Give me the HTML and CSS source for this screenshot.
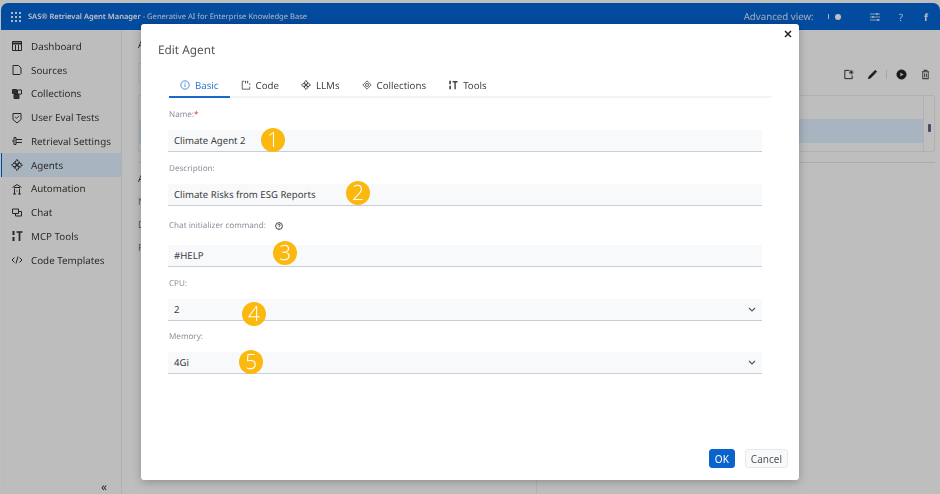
FILE: index.html
```html
<!DOCTYPE html>
<html lang="en">
<head>
<meta charset="utf-8">
<title>Edit Agent</title>
<link rel="stylesheet" href="styles.css">
</head>
<body>
<div class="app">
  <header class="topbar">
    <svg class="grid-icon" width="10" height="10" viewBox="0 0 10 10" fill="#f0f6ff"><rect x="0" y="0" width="2" height="2"/><rect x="4" y="0" width="2" height="2"/><rect x="8" y="0" width="2" height="2"/><rect x="0" y="4" width="2" height="2"/><rect x="4" y="4" width="2" height="2"/><rect x="8" y="4" width="2" height="2"/><rect x="0" y="8" width="2" height="2"/><rect x="4" y="8" width="2" height="2"/><rect x="8" y="8" width="2" height="2"/></svg>
    <span class="brand">SAS® Retrieval Agent Manager</span>
    <span class="subtitle">&nbsp;- Generative AI for Enterprise Knowledge Base</span>
    <div class="top-right">
      <span class="adv">Advanced view:</span>
      <span class="toggle"><i class="tick"></i><i class="knob"></i></span>
      <svg class="sliders" width="10" height="8" viewBox="0 0 10 8" stroke="#e4eefc" fill="none"><path d="M0 1h10M0 4h10M0 7h10" stroke-width=".8"/><path d="M7 0v2M3 3v2M8 6v2" stroke-width="1.500"/></svg>
      <span class="help">?</span>
      <span class="user">f</span>
    </div>
  </header>
  <div class="body">
    <nav class="sidebar">
      <a class="nav-item"><svg class="nav-icon" viewBox="0 0 12 12"><path d="M1.500 1.500h9v9h-9z"/><path d="M1.500 3.500h9" stroke-width="2"/><path d="M4.500 5v5.500M7.500 5v5.500"/></svg>Dashboard</a>
      <a class="nav-item"><svg class="nav-icon" viewBox="0 0 12 12"><path d="M2 1.500h5.500l2.500 2.500v5.500l-1 1H2z"/></svg>Sources</a>
      <a class="nav-item"><svg class="nav-icon" viewBox="0 0 12 12"><path d="M1.500 1.500h4v4h-4z" fill="#444"/><path d="M6.500 2h4v4h-4z"/><path d="M3 6.500h5v4H3z" fill="#444"/></svg>Collections</a>
      <a class="nav-item"><svg class="nav-icon" viewBox="0 0 12 12"><path d="M2 1.500h8v6l-4 3.500-4-3.500zM4.200 5l1.300 1.300L8 3.800M2 1.500h2"/></svg>User Eval Tests</a>
      <a class="nav-item"><svg class="nav-icon" viewBox="0 0 12 12"><path d="M3 2.500h2v7H3zM5 4.500h6M5 7.500h6M1 6h2"/></svg>Retrieval Settings</a>
      <a class="nav-item active"><svg class="nav-icon" viewBox="0 0 12 12"><path d="M6 1l5 5-5 5-5-5z" stroke-dasharray="1.500 .8" stroke-width="1.400"/><path d="M3.500 3.500l5 5M8.500 3.500l-5 5" stroke-width="1.400"/></svg>Agents</a>
      <a class="nav-item"><svg class="nav-icon" viewBox="0 0 12 12"><path d="M1.500 4.500L6 1.500l4.500 3M3 4.500h6M3.500 5.500v5.500M8.500 5.500v5.500M5.500 8h1M2 11h3M7 11h3"/></svg>Automation</a>
      <a class="nav-item"><svg class="nav-icon" viewBox="0 0 12 12"><path d="M1.500 2h6v4.500h-6zM4.500 6.500v2.500h6V4.500h-3"/></svg>Chat</a>
      <a class="nav-item"><svg class="nav-icon" viewBox="0 0 12 12"><path d="M2.500 1v4M2.500 7v4" stroke-width="2"/><path d="M5.500 2h6M8.500 2v9" stroke-width="1.700"/></svg>MCP Tools</a>
      <a class="nav-item"><svg class="nav-icon" viewBox="0 0 12 12"><path d="M3.500 3.500L1 6l2.500 2.500M8.500 3.500L11 6 8.500 8.500M7 2.500L5 9.500"/></svg>Code Templates</a>
      <span class="collapse">«</span>
    </nav>
    <main class="main">
      <div class="main-left">
        <p class="bg-title">A</p>
        <div class="bg-search"></div>
        <div class="bg-box"><div class="bg-head"></div><div class="bg-row"></div></div>
        <div class="bg-divider"></div>
        <p class="bg-a">A</p>
        <p class="bg-line">N</p>
        <p class="bg-line">D</p>
        <p class="bg-line">F</p>
      </div>
      <div class="main-right">
        <div class="toolbar">
          <svg class="tool" viewBox="0 0 12 12"><path d="M7 1.500H2v9h8V7"/><path d="M9 1v5M6.500 3.500h5M7.300 1.800l3.400 3.400M10.700 1.800L7.300 5.200" stroke-width=".8"/></svg>
          <svg class="tool" viewBox="0 0 12 12"><path d="M1.500 10.500l1-2.500 5-5 1.500 1.500-5 5z" fill="#222"/><path d="M8 2.500l1-1 1.500 1.500-1 1z" fill="#222"/></svg>
          <i class="tool-sep"></i>
          <svg class="tool" viewBox="0 0 12 12"><circle cx="6" cy="6" r="5" fill="#222"/><path d="M4.700 3.700v4.600L8.300 6z" fill="#ddd" stroke="none"/></svg>
          <svg class="tool dim" viewBox="0 0 12 12"><path d="M2 3h8M4.500 3V1.500h3V3M3 3v7.500h6V3M5 5v4M7 5v4"/></svg>
        </div>
        <div class="table">
          <div class="table-col">
            <div class="table-head"></div>
            <div class="table-row"></div>
          </div>
          <div class="table-scroll"><i class="scroll-thumb"></i></div>
        </div>
        <div class="bg-rule"></div>
      </div>
    </main>
  </div>
</div>

<div class="overlay"></div>

<section class="modal">
  <button class="close" aria-label="Close"><svg width="8" height="8" viewBox="0 0 8 8" stroke="#222" stroke-width="1.500"><path d="M1 1l6 6M7 1L1 7"/></svg></button>
  <h1 class="modal-title">Edit Agent</h1>
  <div class="tabs">
    <a class="tab active"><svg class="tab-icon" viewBox="0 0 12 12"><circle cx="6" cy="6" r="5"/><path d="M6 5.300v3.200M6 3.200v1.200"/></svg>Basic</a>
    <a class="tab"><svg class="tab-icon" viewBox="0 0 12 12"><path d="M4 1.500H1.500v9.500h9V8M10.500 6V4" /><path d="M5.500 1v3M8 1v3" stroke-width="1.200"/></svg>Code</a>
    <a class="tab"><svg class="tab-icon" viewBox="0 0 12 12"><path d="M6 1l5 5-5 5-5-5z" stroke-dasharray="1.500 .8" stroke-width="1.400"/><path d="M3.500 3.500l5 5M8.500 3.500l-5 5" stroke-width="1.400"/></svg>LLMs</a>
    <a class="tab"><svg class="tab-icon" viewBox="0 0 12 12"><path d="M6 1l2 2-2 2-2-2zM3 4l2 2-2 2-2-2zM9 4l2 2-2 2-2-2zM6 7l2 2-2 2-2-2z"/></svg>Collections</a>
    <a class="tab"><svg class="tab-icon" viewBox="0 0 12 12"><path d="M2.500 1v4M2.500 7v4" stroke-width="2"/><path d="M5.500 2h6M8.500 2v9" stroke-width="1.700"/></svg>Tools</a>
  </div>
  <form class="form">
    <div class="field name">
      <label class="label">Name:<em class="req">*</em></label>
      <div class="control">Climate Agent 2<span class="badge b1">1</span></div>
    </div>
    <div class="field desc">
      <label class="label">Description:</label>
      <div class="control">Climate Risks from ESG Reports<span class="badge b2">2</span></div>
    </div>
    <div class="field chat">
      <label class="label">Chat initializer command:<svg class="help-icon" viewBox="0 0 10 10"><circle cx="5" cy="5" r="3.400"/><path d="M3.900 4.200a1.100 1.100 0 1 1 1.400 1.100L5 6M5 6.800v.6"/></svg></label>
      <div class="control">#HELP<span class="badge b3">3</span></div>
    </div>
    <div class="field cpu">
      <label class="label">CPU:</label>
      <div class="control">2<span class="badge b4">4</span><svg class="chev" width="8" height="5" viewBox="0 0 8 5" fill="none" stroke="#555" stroke-width="1.100"><path d="M1 1l3 3 3-3"/></svg></div>
    </div>
    <div class="field mem">
      <label class="label">Memory:</label>
      <div class="control">4Gi<span class="badge b5">5</span><svg class="chev" width="8" height="5" viewBox="0 0 8 5" fill="none" stroke="#555" stroke-width="1.100"><path d="M1 1l3 3 3-3"/></svg></div>
    </div>
  </form>
  <footer class="modal-foot">
    <button class="btn primary" type="button">OK</button>
    <button class="btn" type="button">Cancel</button>
  </footer>
</section>
</body>
</html>
```

FILE: styles.css
```css
* { box-sizing: border-box; }
html, body { margin: 0; height: 100%; }
body {
  width: 940px; height: 494px; overflow: hidden; position: relative;
  background: #fff; font-family: "Noto Sans", "Open Sans", sans-serif; color: #3a3a3a;
  text-rendering: geometricPrecision; filter: blur(.4px);
}
.app { display: flex; flex-direction: column; height: 494px; padding: 3px 0 0 1px; }

.topbar {
  height: 27px; flex: none; display: flex; align-items: center; padding: 0 0 0 10px;
  background: #0464d5; border-radius: 7px 7px 0 0; color: #fff;
}
.grid-icon { margin-right: 7px; flex: none; }
.brand { font-weight: 600; font-size: 7.5px; color: #fff; }
.subtitle { color: #eaf2fd; font-size: 7.6px; }
.top-right { margin-left: auto; display: flex; align-items: center; }
.adv { font-size: 9.7px; color: #d6e5f8; margin-right: 14px; }
.toggle { display: flex; align-items: center; gap: 6px; margin-right: 29px; }
.tick { width: 1px; height: 5px; background: #e4eefc; }
.knob { width: 6px; height: 6px; border-radius: 50%; background: #fff; }
.sliders { margin-right: 19px; }
.help { font-size: 10px; margin-right: 21px; color: #e4eefc; }
.user { font-size: 10px; font-weight: 700; margin-right: 10px; color: #f2f6fc; width: 6px; }

.body { flex: 1; display: flex; min-height: 0; }
.sidebar {
  width: 121px; flex: none; display: flex; flex-direction: column; padding-top: 4.500px;
  background: #fdfdfd; border-right: 1px solid #ebebeb; position: relative;
}
.nav-item {
  height: 23.75px; flex: none; display: flex; align-items: center; padding-left: 9px;
  font-size: 9.8px; color: #3a3a3a; border-left: 1px solid transparent;
}
.nav-item.active { background: #e1f1ff; border-left-color: #0464d5; }
.nav-icon { width: 12px; height: 12px; margin-right: 8px; flex: none; fill: none; stroke: #333; stroke-width: 1; }
.collapse { position: absolute; right: 14px; bottom: 0; font-size: 12px; line-height: 14px; color: #333; }

.main { flex: 1; display: flex; background: #fefefe; min-width: 0; }
.main-left { width: 415px; padding: 8px 0 0 16px; font-size: 9.5px; color: #333; flex: none; border-right: 1px solid #eee; }
.main-left p { margin: 0; }
.bg-title { height: 25px; }
.bg-search { height: 20px; border: 1px solid #f0f0f0; margin-bottom: 12px; }
.bg-box { height: 57px; border: 1px solid #eee; }
.bg-head { height: 24px; }
.bg-row { height: 24px; background: #e1f1ff; }
.bg-divider { height: 1px; background: #e6e6e6; margin: 10px 0 9px; }
.bg-a { height: 23px; }
.bg-line { height: 23px; color: #777; }
.main-right { flex: 1; padding: 0 5px 0 0; min-width: 0; }
.toolbar { height: 20px; margin: 34px 0 11px; padding-right: 4.500px; display: flex; justify-content: flex-end; align-items: center; gap: 13px; }
.tool { width: 11px; height: 11px; fill: none; stroke: #222; stroke-width: 1; }
.tool.dim { stroke: #555; stroke-width: 1.100; }
.tool-sep { width: 1px; height: 9px; background: #ddd; margin: 0 -4.500px; }
.table { height: 57px; border: 1px solid #ececec; border-radius: 2px; display: flex; }
.table-col { flex: 1; min-width: 0; display: flex; flex-direction: column; }
.table-head { height: 23px; flex: none; }
.table-row { height: 24px; flex: none; background: #e1f1ff; }
.table-scroll { width: 11px; flex: none; border-left: 1px solid #ececec; display: flex; justify-content: center; padding-top: 28px; }
.scroll-thumb { width: 3px; height: 8px; background: #5a6a80; border-radius: 1px; }
.bg-rule { height: 1px; background: #e6e6e6; margin-top: 10px; }

.overlay { position: absolute; inset: 0; background: rgba(0, 0, 0, 0.25); }

.modal {
  position: absolute; left: 141px; top: 24px; width: 658px; height: 456px; background: #fff;
  border-radius: 3px; box-shadow: 0 2px 10px rgba(0,0,0,.25); padding: 18px 28px 0 17px;
  display: flex; flex-direction: column;
}
.close { position: absolute; right: 7px; top: 6px; border: 0; background: none; padding: 0; width: 8px; height: 8px; display: flex; }
.modal-title { margin: 0; font-size: 11.8px; font-weight: 400; line-height: 16px; color: #555; height: 30px; }
.tabs { display: flex; height: 26px; margin-left: 11px; border-bottom: 2px solid #f3f4f6; flex: none; margin-right: -1px; }
.tab { display: flex; align-items: center; height: 26px; padding: 0 11px; font-size: 9.7px; color: #444; }
.tab.active { color: #2f79cf; border-bottom: 2px solid #1a68c7; padding-top: 2px; }
.tab-icon { width: 10px; height: 10px; margin-right: 5px; fill: none; stroke: currentColor; stroke-width: 1; flex: none; }

.form { margin-left: 10px; width: 594px; flex: none; display: flex; flex-direction: column; }
.field { display: flex; flex-direction: column; }
.label { font-size: 8.1px; line-height: 12px; color: #8a8f99; display: flex; align-items: center; height: 12px; padding: 2px 0 0 1px; }
.req { color: #d33; font-style: normal; }
.control {
  height: 22px; margin-top: 10px; background: #f8f9fb; border-bottom: 1px solid #c9ced6; padding-left: 6px;
  display: flex; align-items: center; font-size: 9.6px; color: #3c3c3c; position: relative;
}
.field.name { margin-top: 10px; }
.field.desc { margin-top: 10px; }
.field.chat { margin-top: 13px; }
.field.chat .control { margin-top: 14px; }
.field.cpu { margin-top: 10px; }
.field.mem { margin-top: 9px; }
.help-icon { width: 10px; height: 10px; margin-left: 8px; fill: none; stroke: #333; stroke-width: .9; }
.chev { position: absolute; right: 6px; top: 8px; }
.badge {
  position: absolute; width: 24px; height: 24px; border-radius: 50%; background: #fbb80f; color: #fff;
  font-size: 21px; line-height: 24px; text-align: center; font-weight: 300; font-family: "Open Sans", sans-serif;
}
.b1 { left: 93px; top: -2px; }
.b2 { left: 178px; top: -3px; }
.b3 { left: 105px; top: -4px; }
.b4 { left: 74px; top: 3px; }
.b5 { left: 71px; top: -2px; }

.modal-foot { margin-top: auto; display: flex; justify-content: flex-end; gap: 10px; padding-bottom: 12px; margin-right: -17px; }
.btn {
  height: 19px; border: 1px solid #e8e9ec; background: #f8f9fb; border-radius: 3px; padding: 0 5px;
  font: 10px "Noto Sans", sans-serif; color: #555; min-width: 25px;
}
.btn.primary { background: #0a63cc; border-color: #0a63cc; color: #fff; }
```
